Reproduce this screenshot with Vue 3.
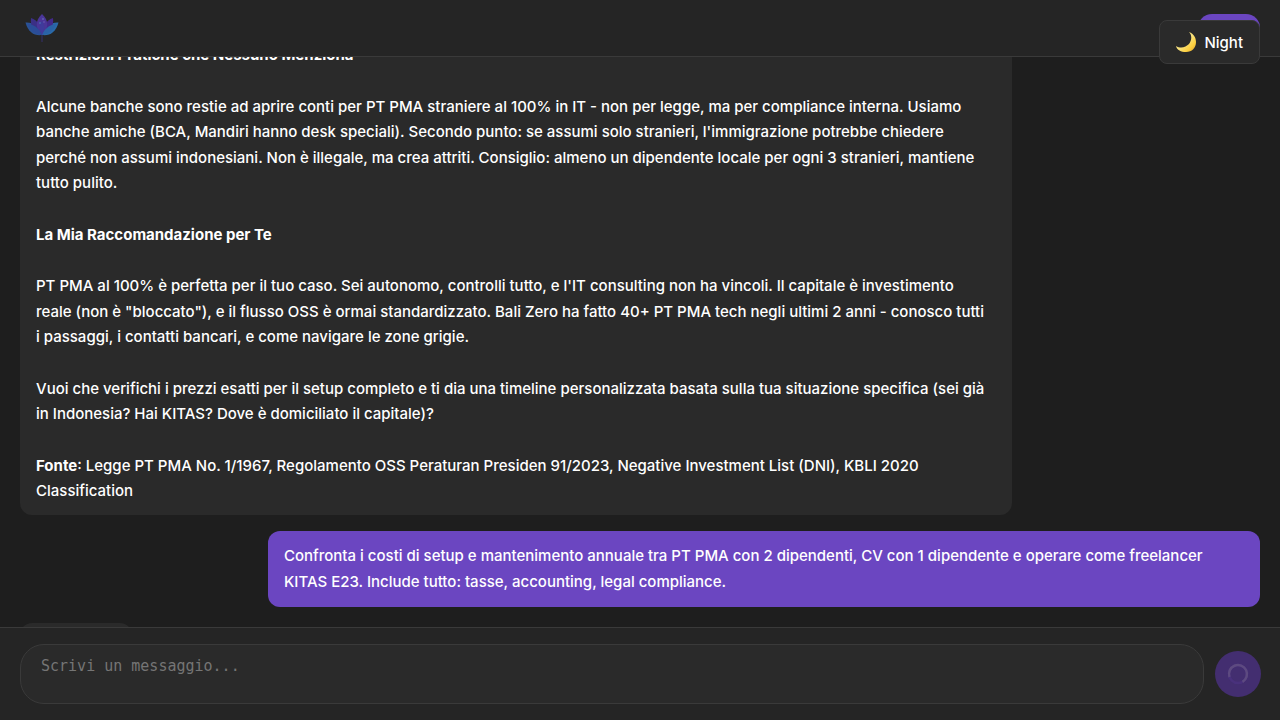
<script setup>
import { onMounted, ref } from 'vue'

const thread = ref(null)
const typing = ref(null)
const draft = ref('')

onMounted(() => {
  const el = thread.value
  el.scrollTop = typing.value.offsetTop - el.clientHeight + 4
})
</script>

<template>
  <div class="chat">
    <header class="topbar">
      <svg class="logo" viewBox="0 0 44 44" aria-label="Logo" role="img">
        <path d="M22 28v8" stroke="#35306f" stroke-width="1" />
        <path d="M22 29C14 30 8 26 5.500 16.500 13 16 20 20 22 29z" fill="#2a5295" />
        <path d="M22 29c8 1 14-3 16.500-12.500C31 16 24 20 22 29z" fill="#2a6aa8" />
        <path d="M22 29C13 26 10 20 11 12c7 2 11 9 11 17z" fill="#3b2f86" />
        <path d="M22 29c9-3 12-9 11-17-7 2-11 9-11 17z" fill="#43298a" />
        <path d="M22 29c-7-6-7-15 0-21 7 6 7 15 0 21z" fill="#4a3597" />
        <path d="M22 29C15 28 10 24 8 18c7 1 12 5 14 11z" fill="#2b4c98" />
        <path d="M22 29c7-1 12-5 14-11-7 1-12 5-14 11z" fill="#2a62a6" />
        <path d="M22 28c-3-4-3-9 0-13 3 4 3 9 0 13z" fill="#3f3a9b" />
        <circle cx="23" cy="13" r="0.800" fill="#737bc5" />
        <circle cx="20" cy="17" r="0.800" fill="#4184bd" />
        <circle cx="24" cy="16" r="0.800" fill="#6a60b8" />
      </svg>
      <button class="account" type="button" aria-label="Account"></button>
    </header>

    <button class="theme" type="button">
      <svg class="moon" viewBox="0 0 20 20" aria-hidden="true">
        <defs>
          <linearGradient id="moon-fill" x1="0" y1="0" x2="1" y2="1">
            <stop offset="0.5" stop-color="#f9e27c" />
            <stop offset="0.75" stop-color="#fccf3e" />
            <stop offset="1" stop-color="#e0a030" />
          </linearGradient>
        </defs>
        <path d="M13 0c5 2 7 6 7 10 0 6-4 10-10 10C5 20 1 18 0 14c5 3 10 1 13-2 3-4 3-9 0-12z" fill="url(#moon-fill)" />
      </svg>
      <span>Night</span>
    </button>

    <main ref="thread" class="thread">
      <article class="bubble">
        <p><strong>Restrizioni Pratiche che Nessuno Menziona</strong></p>
        <p>Alcune banche sono restie ad aprire conti per PT PMA straniere al 100% in IT - non per legge, ma per compliance interna. Usiamo banche amiche (BCA, Mandiri hanno desk speciali). Secondo punto: se assumi solo stranieri, l'immigrazione potrebbe chiedere perché non assumi indonesiani. Non è illegale, ma crea attriti. Consiglio: almeno un dipendente locale per ogni 3 stranieri, mantiene tutto pulito.</p>
        <p><strong>La Mia Raccomandazione per Te</strong></p>
        <p>PT PMA al 100% è perfetta per il tuo caso. Sei autonomo, controlli tutto, e l'IT consulting non ha vincoli. Il capitale è investimento<br>reale (non è "bloccato"), e il flusso OSS è ormai standardizzato. Bali Zero ha fatto 40+ PT PMA tech negli ultimi 2 anni - conosco tutti<br>i passaggi, i contatti bancari, e come navigare le zone grigie.</p>
        <p>Vuoi che verifichi i prezzi esatti per il setup completo e ti dia una timeline personalizzata basata sulla tua situazione specifica (sei già in Indonesia? Hai KITAS? Dove è domiciliato il capitale)?</p>
        <p><strong>Fonte</strong>: Legge PT PMA No. 1/1967, Regolamento OSS Peraturan Presiden 91/2023, Negative Investment List (DNI), KBLI 2020 Classification</p>
      </article>
      <article class="bubble user">
        <p>Confronta i costi di setup e mantenimento annuale tra PT PMA con 2 dipendenti, CV con 1 dipendente e operare come freelancer KITAS E23. Include tutto: tasse, accounting, legal compliance.</p>
      </article>
      <div ref="typing" class="typing"></div>
    </main>

    <form class="composer" @submit.prevent>
      <textarea v-model="draft" class="field" aria-label="Messaggio" placeholder="Scrivi un messaggio..."></textarea>
      <button class="send" type="submit" aria-label="Invio in corso" disabled>
        <svg viewBox="0 0 24 24" aria-hidden="true">
          <circle cx="12" cy="12" r="9" fill="none" stroke="#49317c" stroke-width="2.500" />
          <path d="M3.500 15A9 9 0 1 1 16.500 19.800" fill="none" stroke="#5d4a80" stroke-width="2.500" />
        </svg>
      </button>
    </form>
  </div>
</template>

<style>
body {
  margin: 0;
  background: #1e1e1e;
}
</style>

<style scoped>
.chat {
  display: flex;
  flex-direction: column;
  height: 100vh;
  overflow: hidden;
  background: #1e1e1e;
  color: #fff;
  font-family: Inter, "Liberation Sans", sans-serif;
  font-size: 15px;
  font-weight: 500;
  line-height: 1.7;
}
.topbar {
  display: flex;
  flex: none;
  align-items: center;
  justify-content: space-between;
  box-sizing: border-box;
  height: 57px;
  padding: 0 20px;
  border-bottom: 1px solid #3a3a3a;
  background: #252525;
}
.logo {
  width: 44px;
  height: 44px;
}
.account {
  width: 62px;
  height: 28px;
  padding: 0;
  border: 0;
  border-radius: 14px;
  background: #6b46c1;
}
.theme {
  position: fixed;
  top: 20px;
  right: 20px;
  z-index: 2;
  display: flex;
  align-items: center;
  gap: 8px;
  height: 44px;
  padding: 0 16px;
  border: 1px solid #3a3a3a;
  border-radius: 8px;
  background: #2a2a2a;
  color: #fff;
  font: 500 15px Inter, "Liberation Sans", sans-serif;
}
.moon {
  width: 20px;
  height: 20px;
}
.thread {
  position: relative;
  display: flex;
  flex: 1;
  flex-direction: column;
  gap: 16px;
  min-height: 0;
  padding: 20px;
  overflow-y: auto;
  scrollbar-width: none;
}
.bubble {
  flex: none;
  align-self: flex-start;
  box-sizing: border-box;
  width: 80%;
  padding: 12px 16px 11px;
  border-radius: 12px;
  background: #2a2a2a;
}
.bubble p {
  margin: 0;
}
.bubble p + p {
  margin-top: 26px;
}
.bubble strong {
  font-weight: 700;
}
.bubble.user {
  align-self: flex-end;
  padding: 12px 16px;
  background: #6b46c1;
  line-height: 26px;
}
.typing {
  flex: none;
  width: 112px;
  height: 48px;
  border-radius: 12px;
  background: #2a2a2a;
}
.composer {
  display: flex;
  flex: none;
  align-items: center;
  gap: 11px;
  padding: 16px 19px 16px 20px;
  border-top: 1px solid #3a3a3a;
  background: #252525;
}
.field {
  flex: 1;
  box-sizing: border-box;
  height: 60px;
  padding: 12px 20px;
  border: 1px solid #3a3a3a;
  border-radius: 24px;
  outline: none;
  background: #2a2a2a;
  color: #fff;
  font: 15px "DejaVu Sans Mono", monospace;
  resize: none;
}
.field::placeholder {
  color: #757575;
}
.send {
  display: flex;
  align-items: center;
  justify-content: center;
  width: 46px;
  height: 46px;
  padding: 0;
  border: 0;
  border-radius: 50%;
  background: #432e70;
}
.send svg {
  width: 24px;
  height: 24px;
}
</style>
